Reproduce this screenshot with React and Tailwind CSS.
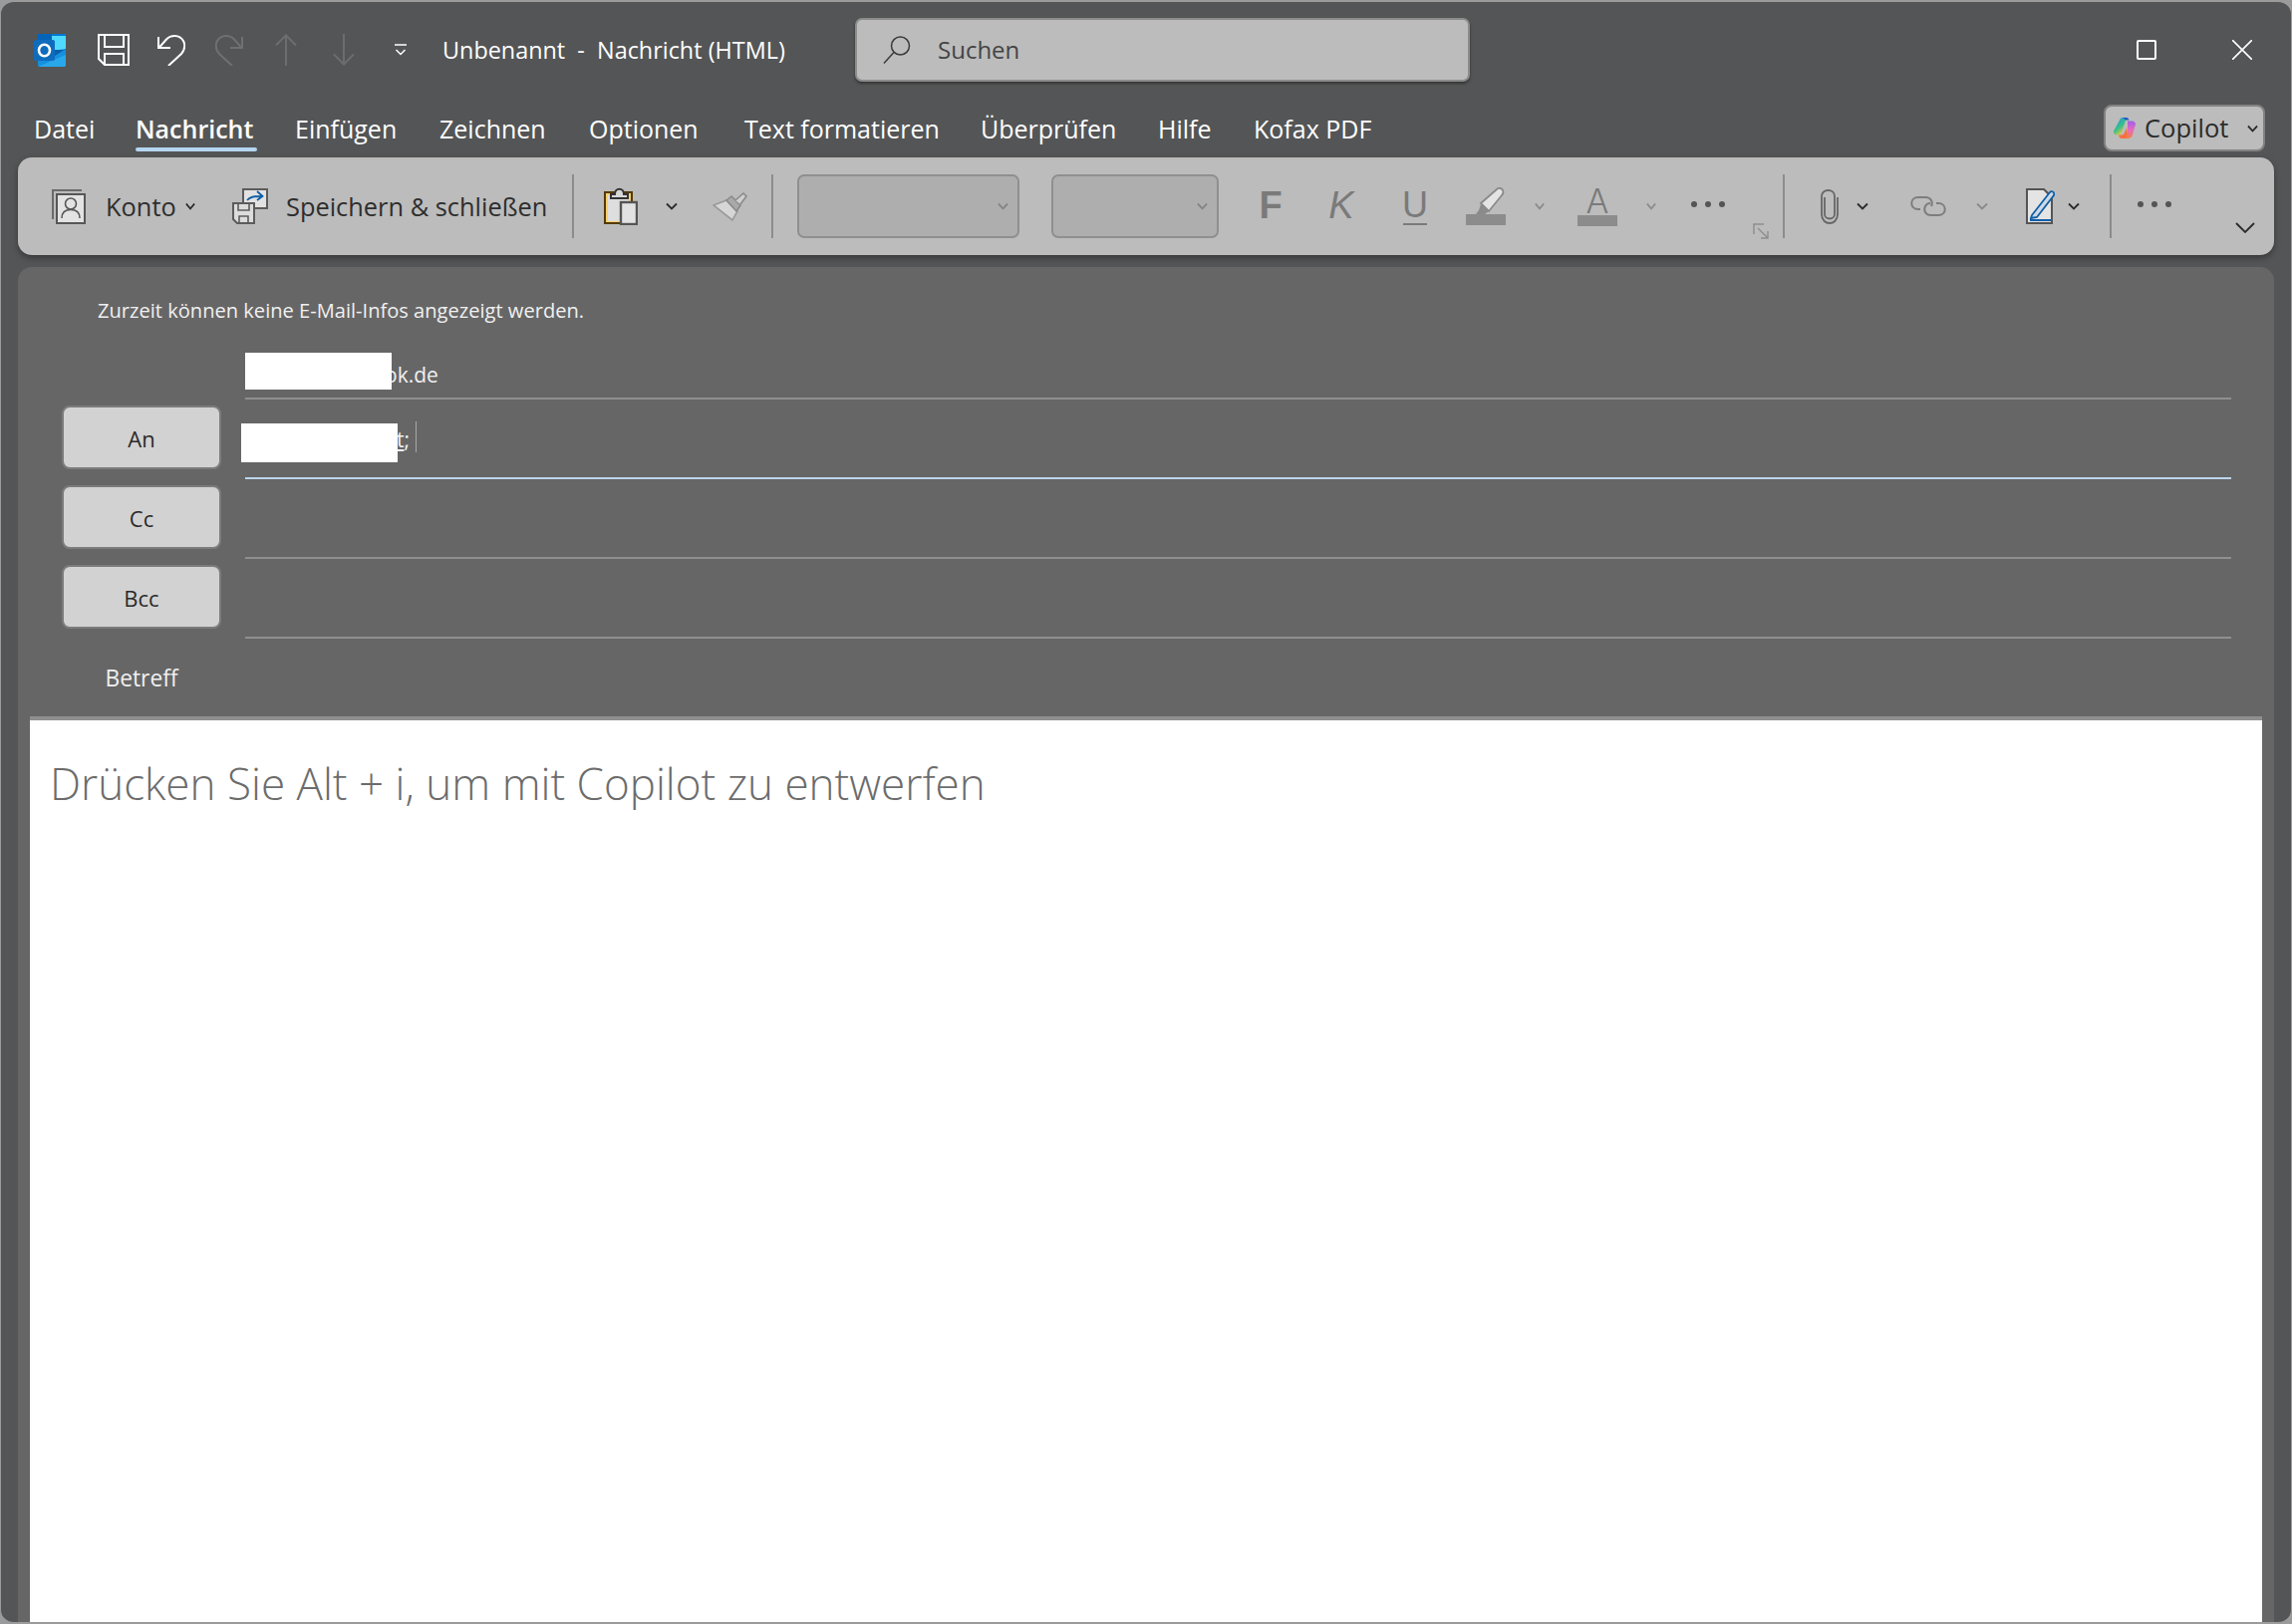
const tabs = [
  { label: 'Datei', ml: 'ml-[33px]', w: 'w-[61px]' },
  { label: 'Nachricht', ml: 'ml-[41px]', w: 'w-[122px]', active: true },
  { label: 'Einfügen', ml: 'ml-[38px]', w: 'w-[104px]' },
  { label: 'Zeichnen', ml: 'ml-[41px]', w: 'w-[107px]' },
  { label: 'Optionen', ml: 'ml-[43px]', w: 'w-[112px]' },
  { label: 'Text formatieren', ml: 'ml-[44px]', w: 'w-[192px]' },
  { label: 'Überprüfen', ml: 'ml-[45px]', w: 'w-[134px]' },
  { label: 'Hilfe', ml: 'ml-[44px]', w: 'w-[53px]' },
  { label: 'Kofax PDF', ml: 'ml-[43px]', w: 'w-[119px]' },
];

function Chevron({ className, color = '#2b2b2b', width = 12 }) {
  return (
    <svg className={`shrink-0 ${className}`} width={width} height="8" viewBox="0 0 12 8" fill="none" preserveAspectRatio="none">
      <path d="M1 1.5l5 5 5-5" stroke={color} strokeWidth="1.8" />
    </svg>
  );
}

function Divider({ className }) {
  return <div className={`w-[2px] h-[64px] shrink-0 bg-[#8c8c8c] ${className}`} />;
}

function Dots({ className }) {
  return (
    <div className={`flex w-[34px] shrink-0 justify-between -mt-[4px] ${className}`}>
      <span className="w-[6px] h-[6px] rounded-full bg-[#555555]" />
      <span className="w-[6px] h-[6px] rounded-full bg-[#555555]" />
      <span className="w-[6px] h-[6px] rounded-full bg-[#555555]" />
    </div>
  );
}

function OutlookIcon({ className }) {
  return (
    <svg className={className} width="32" height="33" viewBox="0 0 32 33">
      <rect x="4" y="0" width="28" height="32" rx="2" fill="#28a8ea" />
      <rect x="4" y="0" width="14" height="9" fill="#0364b8" />
      <rect x="18" y="0" width="14" height="9" fill="#0078d4" />
      <rect x="18" y="2" width="14" height="14" fill="#50d9ff" />
      <path d="M4 17l14 0 14-2v16a2 2 0 01-2 2H6a2 2 0 01-2-2z" fill="#1490df" />
      <path d="M32 15L18 24 8 18v-2h24z" fill="#0a5ea8" />
      <path d="M4 33l28-12v10a2 2 0 01-2 2z" fill="#28a8ea" />
      <rect x="0" y="6" width="21" height="21" rx="2" fill="#0f6cbd" />
      <ellipse cx="10.500" cy="16.500" rx="5.500" ry="5.800" fill="none" stroke="#fff" strokeWidth="2.600" />
    </svg>
  );
}

function SaveIcon({ className }) {
  return (
    <svg className={className} width="32" height="32" viewBox="0 0 32 32" fill="none" stroke="#fff" strokeWidth="2">
      <path d="M1 1h30v30H7l-6-6z" />
      <path d="M7 1v12h19V1" />
      <path d="M7 31V20h19v11" />
    </svg>
  );
}

function UndoIcon({ className, color = '#fff' }) {
  return (
    <svg className={className} width="28" height="32" viewBox="0 0 28 32" fill="none" stroke={color} strokeWidth="2">
      <path d="M1 3v11h12" />
      <path d="M1.500 14L9 5.500C13 1 22 0 26 7c2.500 5 .5 10-2 13L11 32" />
    </svg>
  );
}

function ArrowIcon({ className }) {
  return (
    <svg className={className} width="22" height="32" viewBox="0 0 22 32" fill="none" stroke="#6c6d6e" strokeWidth="2">
      <path d="M11 32V1.500M1 11.500l10-10 10 10" />
    </svg>
  );
}

function OverflowIcon({ className }) {
  return (
    <svg className={className} width="12" height="12" viewBox="0 0 12 12" fill="none" stroke="#fff" strokeWidth="1.500">
      <path d="M0 1h12M1.500 6l4.500 4.500L10.500 6" />
    </svg>
  );
}

function SearchIcon({ className }) {
  return (
    <svg className={className} width="28" height="28" viewBox="0 0 28 28" fill="none" stroke="#3a3a3a" strokeWidth="1.500">
      <circle cx="17.500" cy="10" r="9" />
      <path d="M11 16.500L1 27.500" />
    </svg>
  );
}

function AccountIcon({ className }) {
  return (
    <svg className={className} width="34" height="35" viewBox="0 0 34 35" fill="none">
      <path d="M1 30V1h29" stroke="#6b6b6b" strokeWidth="2" />
      <rect x="5" y="5" width="28" height="29" fill="#e3e3e3" stroke="#575757" strokeWidth="2" />
      <circle cx="19" cy="14.500" r="5.500" stroke="#575757" strokeWidth="1.600" />
      <path d="M10 29c0-6 4-8.500 9-8.500s9 2.500 9 8.500" stroke="#575757" strokeWidth="1.600" />
    </svg>
  );
}

function SaveCloseIcon({ className }) {
  return (
    <svg className={className} width="36" height="36" viewBox="0 0 36 36" fill="none">
      <rect x="11" y="1" width="24" height="19" fill="#e2e2e2" stroke="#5c5c5c" strokeWidth="2" />
      <path d="M15 12c3-4 8-4 15-4M25 3l5.500 5-5.500 4" stroke="#0f5fa8" strokeWidth="1.800" />
      <path d="M1 15h21v20H5l-4-4z" fill="#dcdcdc" stroke="#5c5c5c" strokeWidth="2" />
      <path d="M6 15v7h11v-7M7 35v-7h9v7" stroke="#5c5c5c" strokeWidth="1.600" />
    </svg>
  );
}

function PasteIcon({ className }) {
  return (
    <svg className={className} width="34" height="38" viewBox="0 0 34 38" fill="none">
      <rect x="1" y="5" width="27" height="31" fill="#f6cf6e" stroke="#533a04" strokeWidth="2" />
      <rect x="4" y="8" width="21" height="26" fill="#dedede" />
      <path d="M7 11V7h4c0-7 9-7 9 0h4v4z" fill="#d8d8d8" stroke="#333" strokeWidth="2" />
      <rect x="17" y="15" width="16" height="22" fill="#e2e2e2" stroke="#555" strokeWidth="2.400" />
    </svg>
  );
}

function BrushIcon({ className }) {
  return (
    <svg className={className} width="35" height="30" viewBox="0 0 35 30" fill="none">
      <path d="M1 14l13-5 11 11-5 9z" fill="#d6d6d6" stroke="#9a9a9a" strokeWidth="1.600" />
      <path d="M14 9l5-4 9 9-4 6z" fill="#a9a9a9" stroke="#8a8a8a" strokeWidth="1.600" />
      <path d="M23 9l8-7 3 3-6 8" fill="#cfcfcf" stroke="#8a8a8a" strokeWidth="1.600" />
    </svg>
  );
}

function HighlighterIcon({ className }) {
  return (
    <svg className={className} width="40" height="38" viewBox="0 0 40 38" fill="none">
      <path d="M15 16L31 2c2-2 5-1 6 1s1 3-1 5L23 24z" fill="#e4e4e4" stroke="#8a8a8a" strokeWidth="1.800" />
      <path d="M15 17l8 7-4 3H10l3-4z" fill="#8a8a8a" />
      <rect x="0" y="27" width="40" height="11" fill="#8c8c8c" />
    </svg>
  );
}

function LauncherIcon({ className }) {
  return (
    <svg className={className} width="16" height="16" viewBox="0 0 16 16" fill="none" stroke="#8d8d8d" strokeWidth="1.400">
      <path d="M1 11V1h10" />
      <path d="M5 5l10 10M15 8v7H8" />
    </svg>
  );
}

function ClipIcon({ className }) {
  return (
    <svg className={className} width="18" height="36" viewBox="0 0 18 36" fill="none" stroke="#666" strokeWidth="1.800">
      <path d="M4 9v17c0 6 10 6 10 0V8C14 0 1 0 1 8v18c0 12 16 12 16 0V9" />
    </svg>
  );
}

function LinkIcon({ className }) {
  return (
    <svg className={className} width="36" height="20" viewBox="0 0 36 20" fill="none" stroke="#7d7d7d" strokeWidth="2">
      <path d="M10 13H8C-1 13-1 1 8 1h7c6 0 8 5 6 9" />
      <path d="M26 7h2c9 0 9 12 0 12h-7c-6 0-8-5-6-9 1-2 3-3 5-3" />
    </svg>
  );
}

function EditorIcon({ className }) {
  return (
    <svg className={className} width="29" height="36" viewBox="0 0 29 36" fill="none">
      <path d="M1 1h17l8 8v26H1z" fill="#e4e4e4" stroke="#555" strokeWidth="2" />
      <path d="M6 27L24 4c2-2 5 0 4 3L11 29l-6 1z" fill="#cfd8e4" stroke="#0f5fa8" strokeWidth="1.800" />
      <path d="M4 32h21" stroke="#0f5fa8" strokeWidth="1.800" />
    </svg>
  );
}

function CopilotIcon({ className }) {
  return (
    <svg className={className} width="22" height="21" viewBox="0 0 22 21">
      <defs>
        <linearGradient id="cpA" x1="0" y1="0" x2="0.600" y2="1">
          <stop offset="0" stopColor="#2a8fe8" />
          <stop offset="0.600" stopColor="#35c08a" />
          <stop offset="1" stopColor="#f5c93a" />
        </linearGradient>
        <linearGradient id="cpB" x1="0.500" y1="0" x2="0.500" y2="1">
          <stop offset="0" stopColor="#a05fe6" />
          <stop offset="0.500" stopColor="#e56ac4" />
          <stop offset="1" stopColor="#f7803c" />
        </linearGradient>
      </defs>
      <path d="M6 2.500C6.500 1 7.500 0 9 0h4L8 15c-.5 1.500-1.500 2.500-3 2.500H3c-2 0-3.500-2-3-4z" fill="url(#cpA)" />
      <path d="M9 0h3.500c1.500 0 2.500 1 3 2.500H12z" fill="#1a58c8" />
      <path d="M14 3.500h4.500c2.500 0 4 2 3.300 4L19 17c-.5 2.500-2.500 4-4.500 4H8l4-2c1 0 1.500-1 2-2z" fill="url(#cpB)" />
      <path d="M8 21c-1.500 0-2.500-1-3-3.500h3c1.500 0 2.500-1 3-2.500l2-5 1 7c-.5 2-1.500 4-3 4z" fill="#f6703f" />
    </svg>
  );
}

function AddressRow({ label, children, active }) {
  return (
    <div className="flex h-[80px] pr-[43px]">
      <div className="ml-[44px] w-[160px] shrink-0 pt-[6px]">
        {label && (
          <button className="w-full h-[64px] pt-[3px] rounded-[8px] bg-[#d2d2d2] border-2 border-[#7c7c7c] text-[#2a2a2a] text-[22px]">
            {label}
          </button>
        )}
      </div>
      <div className={`ml-[24px] flex-1 flex border-b-2 ${active ? 'border-[#bcd6ec]' : 'border-[#8f8f8f]'}`}>
        {children}
      </div>
    </div>
  );
}

export default function App() {
  return (
    <div className="w-[2300px] h-[1630px] bg-[#9b9b9b] font-['Open_Sans',sans-serif]">
      <div className="h-full flex flex-col rounded-[14px] overflow-hidden border-t-2 border-b-2 border-x border-[#9b9b9b] bg-[#545556]">
        {/* Title bar */}
        <div className="h-[96px] shrink-0 flex items-center">
          <OutlookIcon className="ml-[33px] shrink-0" />
          <SaveIcon className="ml-[32px] shrink-0" />
          <UndoIcon className="ml-[28px] shrink-0" />
          <UndoIcon className="ml-[30px] shrink-0 -scale-x-100" color="#6f7071" />
          <ArrowIcon className="ml-[32px] shrink-0" />
          <ArrowIcon className="ml-[36px] shrink-0 rotate-180" />
          <OverflowIcon className="ml-[40px] shrink-0" />
          <div className="ml-[36px] w-[343px] shrink-0 pt-[2px] text-[23.400px] text-white whitespace-pre">Unbenannt  -  Nachricht (HTML)</div>
          <div className="ml-[71px] w-[617px] h-[64px] shrink-0 flex items-center rounded-[7px] bg-[#bcbcbc] border-2 border-[#8c8c8c] shadow-[0_2px_3px_rgba(0,0,0,0.4)]">
            <SearchIcon className="ml-[26px] shrink-0" />
            <span className="ml-[27px] text-[24px] text-[#444444]">Suchen</span>
          </div>
          <div className="ml-[669px] w-[20px] h-[20px] shrink-0 rounded-[2px] border-2 border-white" />
          <svg className="ml-[76px] shrink-0" width="20" height="20" viewBox="0 0 20 20" fill="none" stroke="#fff" strokeWidth="1.600">
            <path d="M0 0l20 20M20 0L0 20" />
          </svg>
        </div>

        {/* Tabs */}
        <div className="h-[60px] shrink-0 flex items-start">
          {tabs.map((t) => (
            <div key={t.label} className={`mt-[13px] shrink-0 ${t.ml} ${t.w}`}>
              <div className={`h-[37px] leading-[36px] text-[25px] text-white whitespace-nowrap ${t.active ? 'font-semibold' : ''}`}>{t.label}</div>
              {t.active && <div className="h-[4px] rounded-full bg-[#b4d6f0]" />}
            </div>
          ))}
          <div className="mt-[7px] ml-auto mr-[26px] w-[162px] h-[47px] flex items-center rounded-[8px] bg-[#bcbcbc] border-2 border-[#828282]">
            <CopilotIcon className="ml-[8px] shrink-0" />
            <span className="ml-[9px] w-[90px] text-[25.500px] text-[#2b2b2b]">Copilot</span>
            <Chevron className="ml-[13px]" width={11} />
          </div>
        </div>

        {/* Ribbon */}
        <div className="mx-[17px] h-[98px] shrink-0 flex items-center rounded-[14px] bg-[#bcbcbc] text-[#2e2e2e] shadow-[0_3px_6px_rgba(0,0,0,0.35)]">
          <AccountIcon className="ml-[34px] shrink-0" />
          <span className="ml-[20px] w-[70px] shrink-0 text-[25.400px]">Konto</span>
          <Chevron className="ml-[10px]" width={10} />
          <SaveCloseIcon className="ml-[37px] shrink-0" />
          <span className="ml-[18px] w-[261px] shrink-0 text-[25.400px] whitespace-nowrap">Speichern &amp; schließen</span>
          <Divider className="ml-[26px]" />
          <PasteIcon className="ml-[30px] shrink-0" />
          <Chevron className="ml-[28px]" />
          <BrushIcon className="ml-[35px] shrink-0" />
          <Divider className="ml-[24px]" />
          <div className="ml-[24px] w-[223px] h-[64px] shrink-0 flex items-center justify-end pr-[9px] rounded-[7px] bg-[#aeaeae] border-2 border-[#8f8f8f]">
            <Chevron color="#848484" width={11} />
          </div>
          <div className="ml-[32px] w-[168px] h-[64px] shrink-0 flex items-center justify-end pr-[9px] rounded-[7px] bg-[#aeaeae] border-2 border-[#8f8f8f]">
            <Chevron color="#848484" width={11} />
          </div>
          <span className="ml-[39px] w-[26px] shrink-0 text-center font-['Liberation_Sans',sans-serif] font-bold text-[38px] leading-none text-[#7a7a7a] -mt-[3px]">F</span>
          <span className="ml-[42px] w-[32px] shrink-0 text-center font-['Liberation_Sans',sans-serif] italic text-[38px] leading-none text-[#7a7a7a] -mt-[3px]">K</span>
          <div className="ml-[43px] w-[30px] shrink-0 flex flex-col items-center">
            <span className="font-['Liberation_Sans',sans-serif] text-[36px] leading-[36px] text-[#7a7a7a]">U</span>
            <div className="w-[24px] h-[2px] bg-[#7a7a7a]" />
          </div>
          <HighlighterIcon className="ml-[36px] shrink-0" />
          <Chevron className="ml-[29px]" color="#8a8a8a" width={10} />
          <div className="ml-[33px] w-[40px] shrink-0 flex flex-col items-center">
            <span className="font-['Inter',sans-serif] font-light text-[34px] leading-[28px] text-[#7a7a7a]">A</span>
            <div className="w-full h-[11px] bg-[#8c8c8c]" />
          </div>
          <Chevron className="ml-[29px]" color="#8a8a8a" width={10} />
          <Dots className="ml-[35px]" />
          <LauncherIcon className="ml-[28px] mt-[50px] shrink-0" />
          <Divider className="ml-[14px]" />
          <ClipIcon className="ml-[36px] shrink-0" />
          <Chevron className="ml-[18px]" />
          <LinkIcon className="ml-[42px] shrink-0" />
          <Chevron className="ml-[30px]" color="#8a8a8a" />
          <EditorIcon className="ml-[38px] shrink-0" />
          <Chevron className="ml-[13px]" />
          <Divider className="ml-[30px]" />
          <Dots className="ml-[26px]" />
          <svg className="ml-[64px] mt-[42px] shrink-0" width="20" height="11" viewBox="0 0 20 11" fill="none" stroke="#2b2b2b" strokeWidth="1.800">
            <path d="M1 1l9 9 9-9" />
          </svg>
        </div>

        {/* Compose panel */}
        <div className="mx-[17px] mt-[12px] flex-1 flex flex-col rounded-t-[14px] bg-[#666666]">
          <div className="h-[53px] shrink-0 pt-[30px] pl-[80px] text-[20.100px] leading-[28px] text-[#f0f0f0]">
            Zurzeit können keine E-Mail-Infos angezeigt werden.
          </div>
          <AddressRow>
            <div className="flex items-start pt-[33px]">
              <div className="relative z-10 w-[147px] h-[37px] bg-white" />
              <span className="-ml-[7px] mt-[6px] text-[21px] leading-[32px] text-[#f0f0f0]">ok.de</span>
            </div>
          </AddressRow>
          <AddressRow label="An" active>
            <div className="flex items-start pt-[24px]">
              <div className="-ml-[4px] relative z-10 w-[157px] h-[39px] bg-white" />
              <span className="-ml-[1px] text-[21px] leading-[32px] text-[#f0f0f0]"><span className="underline">t</span>;</span>
              <div className="ml-[6px] -mt-[2px] w-px h-[31px] bg-[#a8a8a8]" />
            </div>
          </AddressRow>
          <AddressRow label="Cc" />
          <AddressRow label="Bcc" />
          <div className="h-[78px] shrink-0 flex items-center pt-[2px]">
            <div className="ml-[45px] w-[158px] text-center text-[22.800px] text-[#f0f0f0]">Betreff</div>
          </div>
          <div className="mx-[12px] flex-1 bg-white border-t-4 border-[#8f8f8f] pt-[34px] pl-[20px]">
            <div className="text-[44px] leading-[58px] font-light text-[#6c6c6c] whitespace-nowrap">Drücken Sie Alt + i, um mit Copilot zu entwerfen</div>
          </div>
        </div>
      </div>
    </div>
  );
}
